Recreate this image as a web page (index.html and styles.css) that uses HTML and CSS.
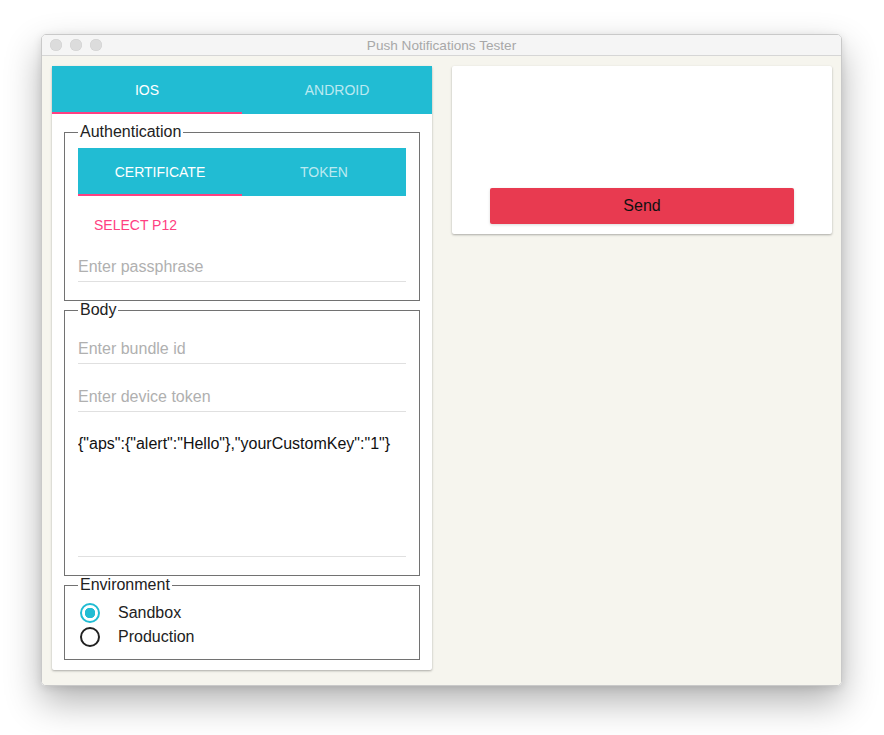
FILE: index.html
```html
<!DOCTYPE html>
<html lang="en">
<head>
    <meta charset="UTF-8">
    <title>Push Notifications Tester</title>
    <link rel="stylesheet" href="styles.css">
</head>
<body>
    <div class="window">
        <div class="titlebar">
            <div class="lights">
                <span class="light"></span>
                <span class="light"></span>
                <span class="light"></span>
            </div>
            <div class="title">Push Notifications Tester</div>
            <div></div>
        </div>

        <div class="content">
            <div class="card left">
                <div class="tabs">
                    <div class="tab active">IOS</div>
                    <div class="tab">ANDROID</div>
                </div>

                <fieldset class="group auth">
                    <legend>Authentication</legend>
                    <div class="tabs">
                        <div class="tab active">CERTIFICATE</div>
                        <div class="tab">TOKEN</div>
                    </div>
                    <button class="flat-button">SELECT P12</button>
                    <input class="text-input pass" type="password" placeholder="Enter passphrase">
                </fieldset>

                <fieldset class="group body-group">
                    <legend>Body</legend>
                    <input class="text-input bundle" type="text" placeholder="Enter bundle id">
                    <input class="text-input token" type="text" placeholder="Enter device token">
                    <textarea class="payload">{"aps":{"alert":"Hello"},"yourCustomKey":"1"}</textarea>
                </fieldset>

                <fieldset class="group env">
                    <legend>Environment</legend>
                    <label class="radio-row">
                        <span class="radio checked"></span>
                        Sandbox
                    </label>
                    <label class="radio-row">
                        <span class="radio"></span>
                        Production
                    </label>
                </fieldset>
            </div>

            <div class="card right">
                <button class="send">Send</button>
            </div>
        </div>
    </div>
</body>
</html>
```

FILE: styles.css
```css
html {
    height: 100%;
}
body {
    box-sizing: border-box;
    min-height: 100%;
    margin: 0;
    padding: 34px 0 0 41px;
    background: #ffffff;
    font-family: "Liberation Sans", Arial, sans-serif;
}
.window {
    box-sizing: border-box;
    width: 801px;
    height: 652px;
    border: 1px solid #c9c9c9;
    border-radius: 5px;
    overflow: hidden;
    box-shadow: 0 16px 36px rgba(0, 0, 0, 0.3), 0 2px 8px rgba(0, 0, 0, 0.1);
}
.titlebar {
    display: grid;
    grid-template-columns: 1fr auto 1fr;
    align-items: center;
    height: 20px;
    background: #f5f5f5;
    border-bottom: 1px solid #d6d6d6;
}
.lights {
    display: flex;
    gap: 8px;
    padding-left: 8px;
}
.light {
    width: 12px;
    height: 12px;
    border-radius: 50%;
    background: #dcdcdc;
    box-shadow: inset 0 0 0 0.5px #d0d0d0;
}
.title {
    font-size: 13.6px;
    color: #a8a8a8;
}
.content {
    display: flex;
    align-items: flex-start;
    gap: 20px;
    height: 629px;
    padding: 10px 9px 0 10px;
    background: #f6f5ee;
}
.card {
    box-sizing: border-box;
    width: 380px;
    background: #ffffff;
    border-radius: 2px;
    box-shadow: 0 1px 3px rgba(0, 0, 0, 0.12), 0 1px 2px rgba(0, 0, 0, 0.2);
}
.card.left {
    padding-bottom: 10px;
}
.card.right {
    padding: 122px 38px 10px;
}
.tabs {
    display: flex;
    height: 48px;
    background: #21bcd3;
}
.tab {
    flex: 1;
    display: flex;
    align-items: center;
    justify-content: center;
    font-size: 14px;
    color: rgba(255, 255, 255, 0.7);
    border-bottom: 2px solid transparent;
    padding-top: 2px;
    box-sizing: border-box;
}
.tab.active {
    color: #ffffff;
    border-bottom-color: #ff4081;
}
.group {
    margin: 9px 12px 0;
    padding: 7px 13px 18px;
    border: 1px solid #727272;
}
.group.body-group,
.group.env {
    margin-top: 0;
}
.group.env {
    padding: 7px 13px 10px;
}
legend {
    padding: 0 2px;
    font-size: 16px;
    color: #222222;
}
.flat-button {
    display: block;
    height: 36px;
    margin-top: 11px;
    padding: 0 16px;
    border: none;
    background: none;
    font-family: inherit;
    font-size: 14px;
    color: #ff4081;
}
.text-input {
    display: block;
    box-sizing: border-box;
    width: 100%;
    height: 30px;
    padding: 0;
    border: none;
    border-bottom: 1px solid #e0e0e0;
    background: none;
    font-family: inherit;
    font-size: 16px;
    outline: none;
}
.text-input::placeholder {
    color: #b0b0b0;
}
.pass {
    margin-top: 9px;
}
.bundle {
    margin-top: 8px;
}
.token {
    margin-top: 18px;
}
.payload {
    display: block;
    box-sizing: border-box;
    width: 100%;
    height: 125px;
    margin-top: 20px;
    padding: 3px 0 0;
    border: none;
    border-bottom: 1px solid #e0e0e0;
    resize: none;
    font-family: inherit;
    font-size: 16px;
    line-height: 18px;
    color: #111111;
    outline: none;
}
.radio-row {
    display: flex;
    align-items: center;
    gap: 18px;
    height: 24px;
    font-size: 16px;
    color: #222222;
}
.radio {
    box-sizing: border-box;
    width: 20px;
    height: 20px;
    margin-left: 2px;
    border: 2px solid #222222;
    border-radius: 50%;
}
.radio.checked {
    border-color: #21bcd3;
    background: radial-gradient(circle, #21bcd3 0 5px, #ffffff 5.5px);
}
.send {
    display: block;
    width: 100%;
    height: 36px;
    border: none;
    border-radius: 2px;
    background: #e83a50;
    font-family: inherit;
    font-size: 16px;
    color: #111111;
    box-shadow: 0 1px 3px rgba(0, 0, 0, 0.15);
}
```
